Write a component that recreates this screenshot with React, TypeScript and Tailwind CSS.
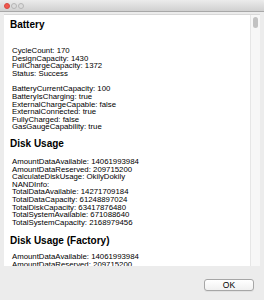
import React from "react";

const battery1 = [
  "CycleCount: 170",
  "DesignCapacity: 1430",
  "FullChargeCapacity: 1372",
  "Status: Success",
];

const battery2 = [
  "BatteryCurrentCapacity: 100",
  "BatteryIsCharging: true",
  "ExternalChargeCapable: false",
  "ExternalConnected: true",
  "FullyCharged: false",
  "GasGaugeCapability: true",
];

const disk = [
  "AmountDataAvailable: 14061993984",
  "AmountDataReserved: 209715200",
  "CalculateDiskUsage: OkilyDokily",
  "NANDInfo:",
  "TotalDataAvailable: 14271709184",
  "TotalDataCapacity: 61248897024",
  "TotalDiskCapacity: 63417876480",
  "TotalSystemAvailable: 671088640",
  "TotalSystemCapacity: 2168979456",
];

const factory = [
  "AmountDataAvailable: 14061993984",
  "AmountDataReserved: 209715200",
  "CalculateDiskUsage: OkilyDokily",
];

function Lines({ items }: { items: string[] }) {
  return (
    <div className="pl-[2px] text-[7.8px] leading-[7.6px] text-black">
      {items.map((t) => (
        <div key={t} className="whitespace-nowrap">{t}</div>
      ))}
    </div>
  );
}

function Heading({ children }: { children: React.ReactNode }) {
  return <h2 className="text-[10px] font-bold leading-[12px] text-black whitespace-nowrap">{children}</h2>;
}

export default function App() {
  return (
    <div
      className="w-[264px] h-[300px] flex flex-col bg-[#ececec] overflow-hidden"
      style={{ fontFamily: "'Liberation Sans', Arial, sans-serif" }}
    >
      {/* title bar */}
      <div className="h-[12px] flex items-center gap-[1px] px-[4px] bg-gradient-to-b from-[#ececec] to-[#d0d0d0] border-b border-[#a8a8a8] rounded-t-[4px]">
        <span className="w-[6px] h-[6px] rounded-full bg-[#f2584f] border border-[#d64a42]" />
        <span className="w-[6px] h-[6px] rounded-full bg-[#dcdcdc] border border-[#b5b5b5]" />
        <span className="w-[6px] h-[6px] rounded-full bg-[#dcdcdc] border border-[#b5b5b5]" />
      </div>

      {/* content */}
      <div className="mt-[2px] mx-[4px] h-[252px] flex bg-white border-t border-[#d8d8d8] overflow-hidden">
        <div className="flex-1 pl-[6px] pt-[4px] overflow-hidden">
          <Heading>Battery</Heading>
          <div className="mt-[16px]">
            <Lines items={battery1} />
          </div>
          <div className="mt-[8px]">
            <Lines items={battery2} />
          </div>
          <div className="mt-[7px]">
            <Heading>Disk Usage</Heading>
          </div>
          <div className="mt-[8px]">
            <Lines items={disk} />
          </div>
          <div className="mt-[9px]">
            <Heading>Disk Usage (Factory)</Heading>
          </div>
          <div className="mt-[6px]">
            <Lines items={factory} />
          </div>
        </div>
        <div className="w-[10px] bg-[#f7f7f7] border-l border-[#e6e6e6] pt-[2px] flex justify-center">
          <div className="w-[5px] h-[11px] rounded-full bg-[#c2c2c2]" />
        </div>
      </div>

      {/* footer */}
      <div className="flex-1 flex justify-end items-start pt-[13px] pr-[10px]">
        <button className="w-[50px] h-[12px] rounded-[3px] border border-[#a6a6a6] bg-gradient-to-b from-white to-[#f0f0f0] text-[8.5px] leading-[10px] text-black shadow-[0_1px_0_rgba(0,0,0,0.05)]">
          OK
        </button>
      </div>
    </div>
  );
}
